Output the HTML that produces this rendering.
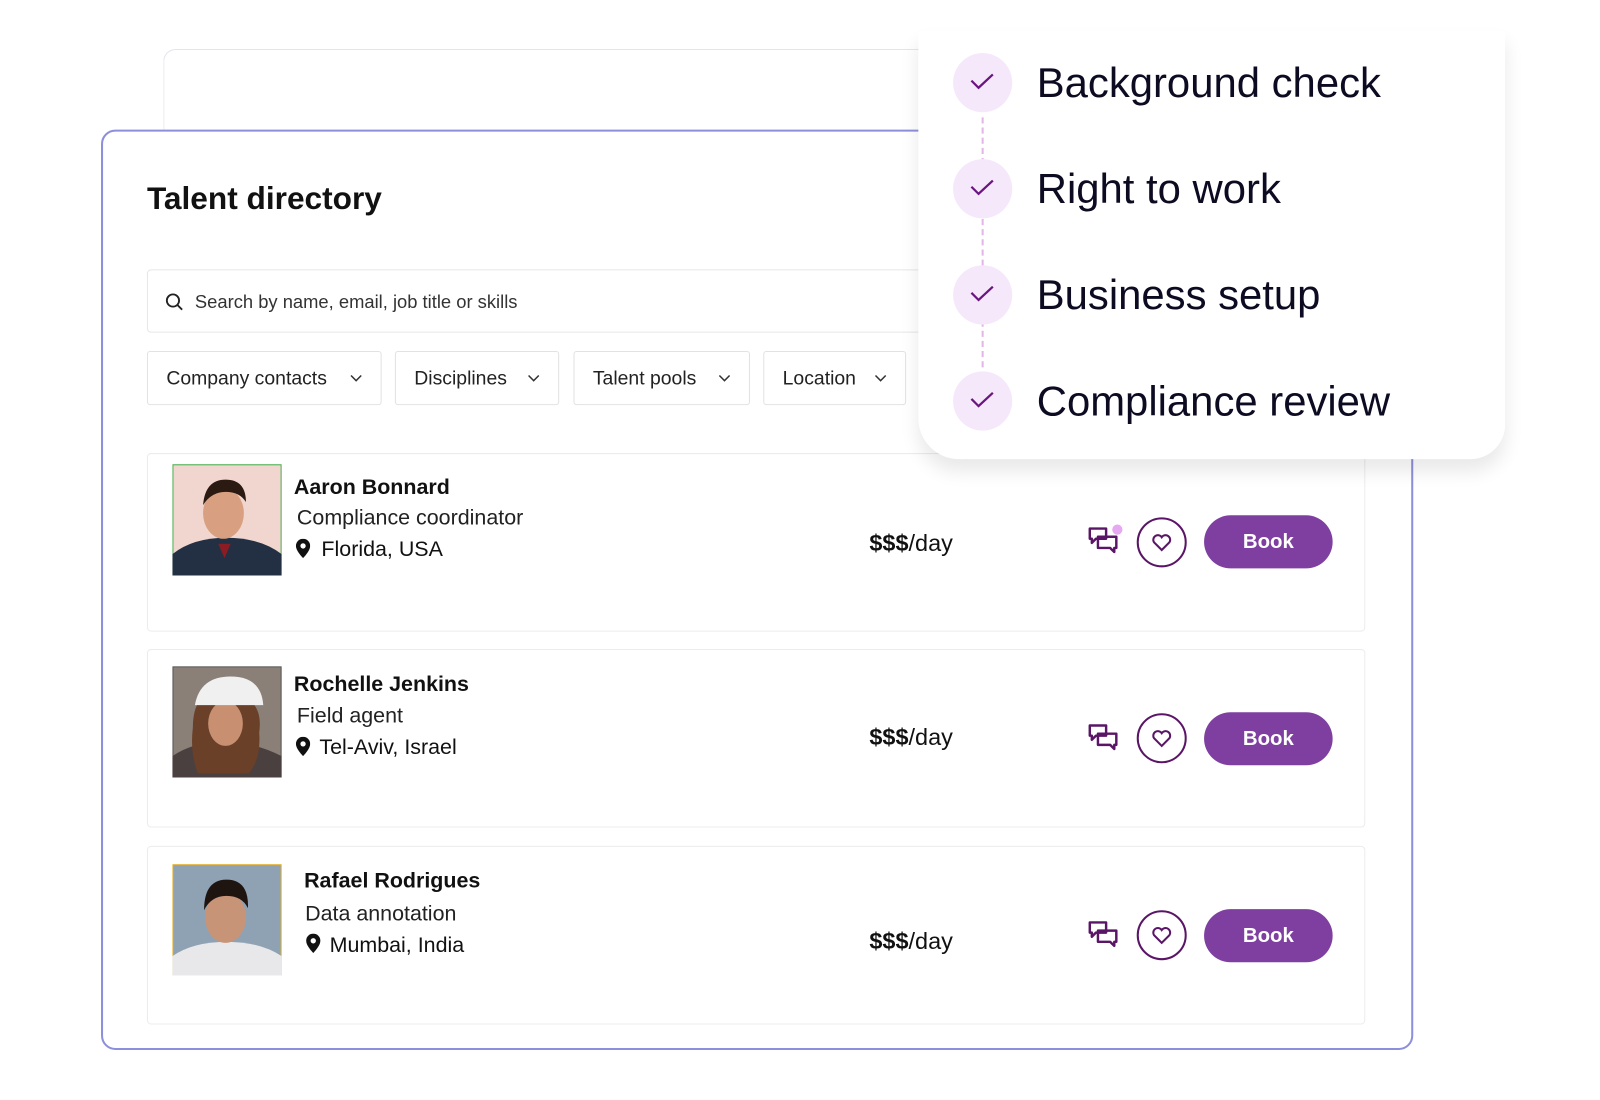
<!DOCTYPE html>
<html><head><meta charset="utf-8"><style>
*{margin:0;padding:0;box-sizing:border-box}
body{width:1600px;height:1100px;background:#fff;position:relative;overflow:hidden;font-family:"Liberation Sans",sans-serif;color:#111}
#w{position:absolute;left:0;top:0;width:1568px;height:1078px;transform:scale(1.0204);transform-origin:0 0}
.abs{position:absolute}
.back{left:160px;top:48px;width:760px;height:90px;border:1.5px solid #e4e4f0;border-bottom:none;border-radius:12px 0 0 0}
.main{left:99px;top:127px;width:1286px;height:902px;border:2px solid #8d8fdc;border-radius:14px;background:#fff}
h1{position:absolute;left:144px;top:177px;font-size:31px;font-weight:bold;color:#111}
.search{left:144px;top:264px;width:780px;height:62px;border:1px solid #e6e6e6;border-radius:4px;font-size:18px;color:#333;padding:21px 0 0 46px}
.filt{top:344px;height:53px;border:1px solid #e2e2e2;border-radius:3px;font-size:19px;color:#222;padding:16px 0 0 18px}
.filt svg{position:absolute;right:18px;top:22px}
.row{left:144px;width:1194px;height:175px;border:1px solid #ececec;border-radius:4px}
.ph{left:169px;width:107px;height:109px}
.name{font-size:21px;font-weight:bold}
.job{font-size:21px;color:#222}
.loc{font-size:21px;color:#111}
.price{left:852px;font-size:23px;color:#111}
.book{left:1180px;width:126px;height:52px;border-radius:26px;background:#7e3fa0;color:#fff;font-weight:bold;font-size:20px;text-align:center;line-height:52px}
.heart{left:1114px;width:49px;height:49px;border-radius:50%;border:2.5px solid #5a1566}
.panel{left:900px;top:30px;width:575px;height:420px;background:#fff;border-radius:0 0 34px 40px;box-shadow:0 12px 18px rgba(0,0,0,.09)}
.ck{left:934px;width:58px;height:58px;border-radius:50%;background:#f6e8fb}
.ck svg{position:absolute;left:16px;top:18px}
.lbl{left:1016px;font-size:41px;color:#0c0b22}
.dash{left:962px;width:0;border-left:2px dashed #e2b6e6}
</style></head><body><div id="w">
<div class="abs back"></div>
<div class="abs main"></div>
<h1>Talent directory</h1>
<div class="abs search">Search by name, email, job title or skills
<svg class="abs" style="left:17px;top:22px" width="18" height="18" viewBox="0 0 18 18" fill="none" stroke="#222" stroke-width="1.8"><circle cx="7.5" cy="7.5" r="6"/><path d="M12 12l4.5 4.5"/></svg></div>
<div class="abs filt" style="left:144px;width:230px">Company contacts<svg width="12" height="8" viewBox="0 0 12 8" fill="none" stroke="#333" stroke-width="1.5"><path d="M1 1l5 5 5-5"/></svg></div>
<div class="abs filt" style="left:387px;width:161px">Disciplines<svg width="12" height="8" viewBox="0 0 12 8" fill="none" stroke="#333" stroke-width="1.5"><path d="M1 1l5 5 5-5"/></svg></div>
<div class="abs filt" style="left:562px;width:173px">Talent pools<svg width="12" height="8" viewBox="0 0 12 8" fill="none" stroke="#333" stroke-width="1.5"><path d="M1 1l5 5 5-5"/></svg></div>
<div class="abs filt" style="left:748px;width:140px">Location<svg width="12" height="8" viewBox="0 0 12 8" fill="none" stroke="#333" stroke-width="1.5"><path d="M1 1l5 5 5-5"/></svg></div>

<div class="abs row" style="top:444px"></div>
<div class="abs row" style="top:636px"></div>
<div class="abs row" style="top:829px"></div>

<svg class="abs ph" style="top:455px" viewBox="0 0 107 109"><rect width="107" height="109" fill="#f1d6cf" stroke="#4caf50" stroke-width="2"/><path d="M0 109V88q20-16 53-16t54 16v21z" fill="#233044"/><ellipse cx="50" cy="48" rx="20" ry="25" fill="#d8a080"/><path d="M30 40q2-25 22-25t20 22q-6-10-20-10t-22 13z" fill="#2a1a12"/><path d="M45 78l6 14 6-14z" fill="#8b1c24"/></svg>
<svg class="abs ph" style="top:653px" viewBox="0 0 107 109"><rect width="107" height="109" fill="#8a8078" stroke="#555" stroke-width="2"/><path d="M0 109V88q20-14 50-14t57 14v21z" fill="#4a4040"/><path d="M20 60q0-40 35-35t30 40q2 25-10 40H25q-8-20-5-45z" fill="#6a4028"/><ellipse cx="52" cy="56" rx="17" ry="22" fill="#c89070"/><path d="M22 38q5-28 35-28t32 28z" fill="#f0f0f0"/></svg>
<svg class="abs ph" style="top:847px" viewBox="0 0 107 109"><rect width="107" height="109" fill="#8ea2b4" stroke="#e8b020" stroke-width="2"/><path d="M0 109V90q20-14 53-14t54 14v19z" fill="#e8e8ea"/><ellipse cx="52" cy="52" rx="20" ry="25" fill="#c89478"/><path d="M31 45q0-30 22-30t21 28q-6-12-21-12t-22 14z" fill="#1e1410"/></svg>

<div class="abs name" style="left:288px;top:466px">Aaron Bonnard</div>
<div class="abs job" style="left:291px;top:496px">Compliance coordinator</div>
<div class="abs loc" style="left:315px;top:527px">Florida, USA</div>
<div class="abs name" style="left:288px;top:659px">Rochelle Jenkins</div>
<div class="abs job" style="left:291px;top:690px">Field agent</div>
<div class="abs loc" style="left:313px;top:721px">Tel-Aviv, Israel</div>
<div class="abs name" style="left:298px;top:852px">Rafael Rodrigues</div>
<div class="abs job" style="left:299px;top:884px">Data annotation</div>
<div class="abs loc" style="left:323px;top:915px">Mumbai, India</div>
<svg class="abs" style="left:290px;top:528px" width="14" height="19" viewBox="0 0 14 19"><path d="M7 0a7 7 0 0 0-7 7c0 5 7 12 7 12s7-7 7-12a7 7 0 0 0-7-7z" fill="#111"/><circle cx="7" cy="7" r="2.6" fill="#fff"/></svg>
<svg class="abs" style="left:290px;top:722px" width="14" height="19" viewBox="0 0 14 19"><path d="M7 0a7 7 0 0 0-7 7c0 5 7 12 7 12s7-7 7-12a7 7 0 0 0-7-7z" fill="#111"/><circle cx="7" cy="7" r="2.6" fill="#fff"/></svg>
<svg class="abs" style="left:300px;top:915px" width="14" height="19" viewBox="0 0 14 19"><path d="M7 0a7 7 0 0 0-7 7c0 5 7 12 7 12s7-7 7-12a7 7 0 0 0-7-7z" fill="#111"/><circle cx="7" cy="7" r="2.6" fill="#fff"/></svg>

<div class="abs price" style="top:519px"><b>$$$</b>/day</div>
<div class="abs price" style="top:709px"><b>$$$</b>/day</div>
<div class="abs price" style="top:909px"><b>$$$</b>/day</div>

<svg class="abs" style="left:1064px;top:512px" width="40" height="36" viewBox="0 0 40 36" fill="none" stroke="#5a1566" stroke-width="2.4" stroke-linejoin="round"><path d="M4 6h16v10H10l-4 4v-4H4z"/><path d="M12 14h18v11h-2v4l-4-4H12z"/><circle cx="31" cy="7" r="5" fill="#e7a8f2" stroke="none"/></svg>
<svg class="abs" style="left:1064px;top:705px" width="40" height="36" viewBox="0 0 40 36" fill="none" stroke="#5a1566" stroke-width="2.4" stroke-linejoin="round"><path d="M4 6h16v10H10l-4 4v-4H4z"/><path d="M12 14h18v11h-2v4l-4-4H12z"/></svg>
<svg class="abs" style="left:1064px;top:898px" width="40" height="36" viewBox="0 0 40 36" fill="none" stroke="#5a1566" stroke-width="2.4" stroke-linejoin="round"><path d="M4 6h16v10H10l-4 4v-4H4z"/><path d="M12 14h18v11h-2v4l-4-4H12z"/></svg>

<div class="abs heart" style="top:507px"><svg class="abs" style="left:12px;top:13px" width="21" height="19" viewBox="0 0 21 19" fill="none" stroke="#5a1566" stroke-width="2"><path d="M10.5 17L3 9.5a4.5 4.5 0 0 1 7.5-5 4.5 4.5 0 0 1 7.5 5z"/></svg></div>
<div class="abs heart" style="top:699px"><svg class="abs" style="left:12px;top:13px" width="21" height="19" viewBox="0 0 21 19" fill="none" stroke="#5a1566" stroke-width="2"><path d="M10.5 17L3 9.5a4.5 4.5 0 0 1 7.5-5 4.5 4.5 0 0 1 7.5 5z"/></svg></div>
<div class="abs heart" style="top:892px"><svg class="abs" style="left:12px;top:13px" width="21" height="19" viewBox="0 0 21 19" fill="none" stroke="#5a1566" stroke-width="2"><path d="M10.5 17L3 9.5a4.5 4.5 0 0 1 7.5-5 4.5 4.5 0 0 1 7.5 5z"/></svg></div>

<div class="abs book" style="top:505px">Book</div>
<div class="abs book" style="top:698px">Book</div>
<div class="abs book" style="top:891px">Book</div>

<div class="abs panel"></div>
<div class="abs dash" style="top:115px;height:245px"></div>
<div class="abs ck" style="top:52px"><svg width="26" height="20" viewBox="0 0 26 20" fill="none" stroke="#6a1580" stroke-width="2.2"><path d="M2 9l7 7L23 3"/></svg></div>
<div class="abs ck" style="top:156px"><svg width="26" height="20" viewBox="0 0 26 20" fill="none" stroke="#6a1580" stroke-width="2.2"><path d="M2 9l7 7L23 3"/></svg></div>
<div class="abs ck" style="top:260px"><svg width="26" height="20" viewBox="0 0 26 20" fill="none" stroke="#6a1580" stroke-width="2.2"><path d="M2 9l7 7L23 3"/></svg></div>
<div class="abs ck" style="top:364px"><svg width="26" height="20" viewBox="0 0 26 20" fill="none" stroke="#6a1580" stroke-width="2.2"><path d="M2 9l7 7L23 3"/></svg></div>
<div class="abs lbl" style="top:58px">Background check</div>
<div class="abs lbl" style="top:162px">Right to work</div>
<div class="abs lbl" style="top:266px">Business setup</div>
<div class="abs lbl" style="top:370px">Compliance review</div>
</div></body></html>
